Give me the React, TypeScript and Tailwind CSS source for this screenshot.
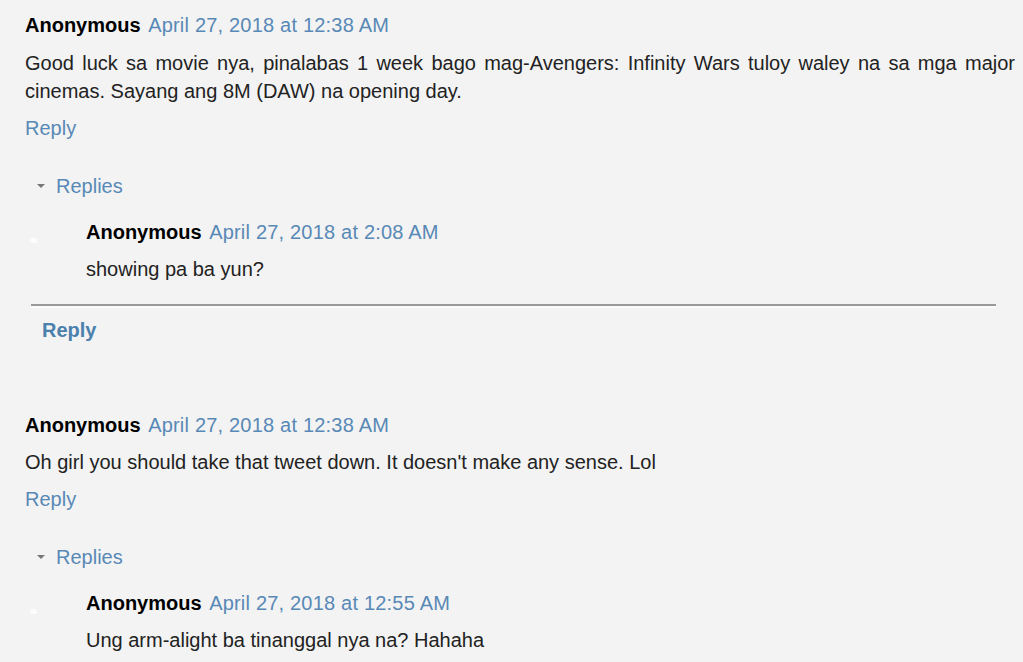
const link = "text-[#5889b6]"

const Header = ({ date, className = "" }: { date: string; className?: string }) => (
  <div className={"h-7 leading-7 whitespace-nowrap " + className}>
    <span className="font-bold text-black">Anonymous</span>{" "}
    <span className={link + " ml-[2px] tracking-[0.2px]"}>{date}</span>
  </div>
)

const Replies = () => (
  <div className="flex items-center h-7 ml-[12px]">
    <span className="w-0 h-0 border-l-[4px] border-r-[4px] border-t-[4px] border-l-transparent border-r-transparent border-t-[#777]" />
    <span className={link + " ml-[11px] leading-7"}>Replies</span>
  </div>
)

const Nested = ({ date, text }: { date: string; text: string }) => (
  <div className="relative ml-[61px] mt-[18px]">
    <span className="absolute left-[-56px] top-[20px] w-[7px] h-[5px] rounded-full bg-[#fcfcfc]" />
    <Header date={date} />
    <div className="mt-[9px] h-7 leading-7 text-[#222]">{text}</div>
  </div>
)

const App = () => {
  return (
    <div
      className="w-[1023px] h-[662px] overflow-hidden bg-[#f3f3f3] text-[20px] text-[#222] pl-[25px] pr-[8px]"
      style={{ fontFamily: '"Liberation Sans", Arial, sans-serif' }}
    >
      <div className="pt-[11px]">
        <Header date="April 27, 2018 at 12:38 AM" />
        <p className="mt-[10px] leading-7 text-justify">
          Good luck sa movie nya, pinalabas 1 week bago mag-Avengers: Infinity Wars tuloy waley na sa mga major cinemas. Sayang ang 8M (DAW) na opening day.
        </p>
        <div className={link + " mt-[9px] h-7 leading-7"}>Reply</div>
        <div className="mt-[30px]">
          <Replies />
          <Nested date="April 27, 2018 at 2:08 AM" text="showing pa ba yun?" />
          <div className="ml-[6px] mr-[19px] mt-[21px] border-t-2 border-[#999] border-b-2 border-b-[#fafafa]" />
          <div className="ml-[17px] mt-[8px] h-7 leading-7 font-bold text-[#4a80ad]">Reply</div>
        </div>
      </div>

      <div className="mt-[67px]">
        <Header date="April 27, 2018 at 12:38 AM" />
        <p className="mt-[9px] leading-7">
          Oh girl you should take that tweet down. It doesn't make any sense. Lol
        </p>
        <div className={link + " mt-[9px] h-7 leading-7"}>Reply</div>
        <div className="mt-[30px]">
          <Replies />
          <Nested date="April 27, 2018 at 12:55 AM" text="Ung arm-alight ba tinanggal nya na? Hahaha" />
        </div>
      </div>
    </div>
  )
}

export default App
